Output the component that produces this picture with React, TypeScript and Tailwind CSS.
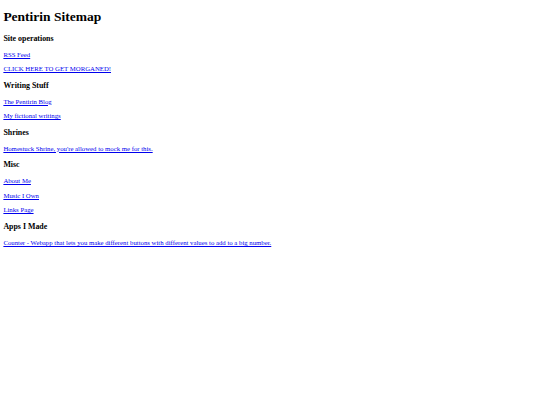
const sections: { title: string; links: string[] }[] = [
  { title: "Site operations", links: ["RSS Feed", "CLICK HERE TO GET MORGANED!"] },
  { title: "Writing Stuff", links: ["The Pentirin Blog", "My fictional writings"] },
  { title: "Shrines", links: ["Homestuck Shrine, you're allowed to mock me for this."] },
  { title: "Misc", links: ["About Me", "Music I Own", "Links Page"] },
  {
    title: "Apps I Made",
    links: ["Counter - Webapp that lets you make different buttons with different values to add to a big number."],
  },
];

export default function App() {
  return (
    <div className="min-h-[405px] bg-white text-black" style={{ fontFamily: '"Liberation Serif", "Times New Roman", serif' }}>
      <div className="m-[3.375px]">
        <h1 className="my-[9.045px] text-[13.5px] font-bold leading-[1.15]">Pentirin Sitemap</h1>
        {sections.map((s) => (
          <div key={s.title}>
            <h3 className="my-[7.9px] text-[7.9px] font-bold leading-[1.15]">{s.title}</h3>
            {s.links.map((l) => (
              <p key={l} className="my-[6.75px] text-[6.75px] leading-[1.15]">
                <a href="#" className="text-[#0000ee] underline">
                  {l}
                </a>
              </p>
            ))}
          </div>
        ))}
      </div>
    </div>
  );
}
